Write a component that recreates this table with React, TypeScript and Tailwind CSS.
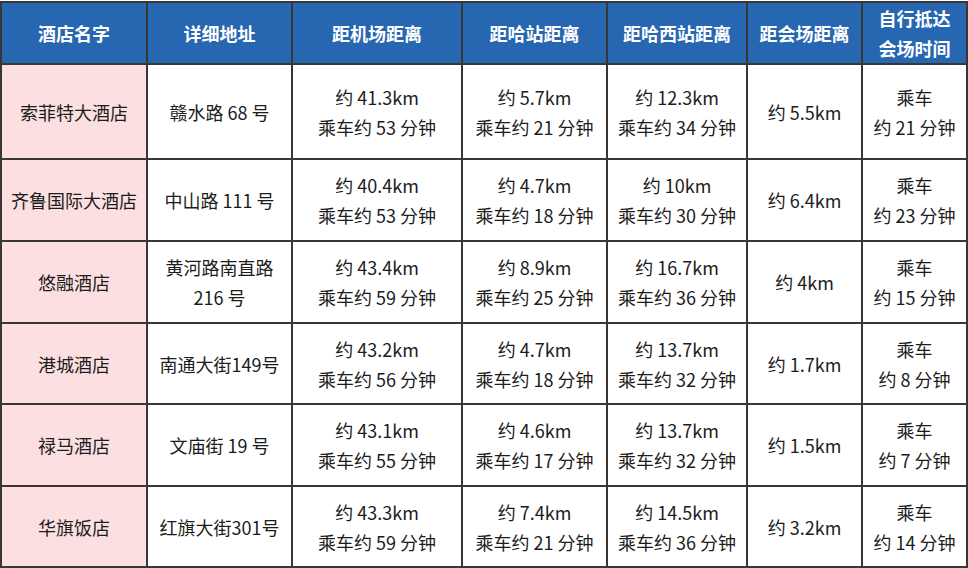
const headers: string[][] = [
  ['酒店名字'],
  ['详细地址'],
  ['距机场距离'],
  ['距哈站距离'],
  ['距哈西站距离'],
  ['距会场距离'],
  ['自行抵达', '会场时间'],
];

const widths = ['w-[146px]', 'w-[145px]', 'w-[170px]', 'w-[145px]', 'w-[140px]', 'w-[115px]', 'w-[105px]'];

type Row = {
  name: string;
  addr: string[];
  airport: [string, string];
  station: [string, string];
  west: [string, string];
  venue: string;
  self: [string, string];
  h: string;
};

const rows: Row[] = [
  { name: '索菲特大酒店', addr: ['赣水路 68 号'], airport: ['约 41.3km', '乘车约 53 分钟'], station: ['约 5.7km', '乘车约 21 分钟'], west: ['约 12.3km', '乘车约 34 分钟'], venue: '约 5.5km', self: ['乘车', '约 21 分钟'], h: 'h-[95px]' },
  { name: '齐鲁国际大酒店', addr: ['中山路 111 号'], airport: ['约 40.4km', '乘车约 53 分钟'], station: ['约 4.7km', '乘车约 18 分钟'], west: ['约 10km', '乘车约 30 分钟'], venue: '约 6.4km', self: ['乘车', '约 23 分钟'], h: 'h-[82px]' },
  { name: '悠融酒店', addr: ['黄河路南直路', '216 号'], airport: ['约 43.4km', '乘车约 59 分钟'], station: ['约 8.9km', '乘车约 25 分钟'], west: ['约 16.7km', '乘车约 36 分钟'], venue: '约 4km', self: ['乘车', '约 15 分钟'], h: 'h-[82px]' },
  { name: '港城酒店', addr: ['南通大街149号'], airport: ['约 43.2km', '乘车约 56 分钟'], station: ['约 4.7km', '乘车约 18 分钟'], west: ['约 13.7km', '乘车约 32 分钟'], venue: '约 1.7km', self: ['乘车', '约 8 分钟'], h: 'h-[81px]' },
  { name: '禄马酒店', addr: ['文庙街 19 号'], airport: ['约 43.1km', '乘车约 55 分钟'], station: ['约 4.6km', '乘车约 17 分钟'], west: ['约 13.7km', '乘车约 32 分钟'], venue: '约 1.5km', self: ['乘车', '约 7 分钟'], h: 'h-[82px]' },
  { name: '华旗饭店', addr: ['红旗大街301号'], airport: ['约 43.3km', '乘车约 59 分钟'], station: ['约 7.4km', '乘车约 21 分钟'], west: ['约 14.5km', '乘车约 36 分钟'], venue: '约 3.2km', self: ['乘车', '约 14 分钟'], h: 'h-[81px]' },
];

function Lines({ lines }: { lines: string[] }) {
  return (
    <>
      {lines.map((l, i) => (
        <div key={i} className="whitespace-nowrap">{l}</div>
      ))}
    </>
  );
}

const cell = 'border-2 border-[#3a3634] text-center align-middle p-0 leading-[30px]';

export default function App() {
  return (
    <div className="w-[968px] h-[568px] bg-white pt-px" style={{ fontFamily: '"Noto Sans CJK SC", "Noto Sans", sans-serif' }}>
      <table className="border-collapse table-fixed w-[966px] text-[18px] text-[#1c1c1c]">
        <thead>
          <tr className="h-[62px] bg-[#2766b1]">
            {headers.map((h, i) => (
              <th key={i} className={`${cell} ${widths[i]} font-bold text-white`}>
                <Lines lines={h} />
              </th>
            ))}
          </tr>
        </thead>
        <tbody>
          {rows.map((r) => (
            <tr key={r.name} className={r.h}>
              <td className={`${cell} bg-[#fce0e1]`}>{r.name}</td>
              <td className={cell}><Lines lines={r.addr} /></td>
              <td className={cell}><Lines lines={r.airport} /></td>
              <td className={cell}><Lines lines={r.station} /></td>
              <td className={cell}><Lines lines={r.west} /></td>
              <td className={cell}>{r.venue}</td>
              <td className={cell}><Lines lines={r.self} /></td>
            </tr>
          ))}
        </tbody>
      </table>
    </div>
  );
}
